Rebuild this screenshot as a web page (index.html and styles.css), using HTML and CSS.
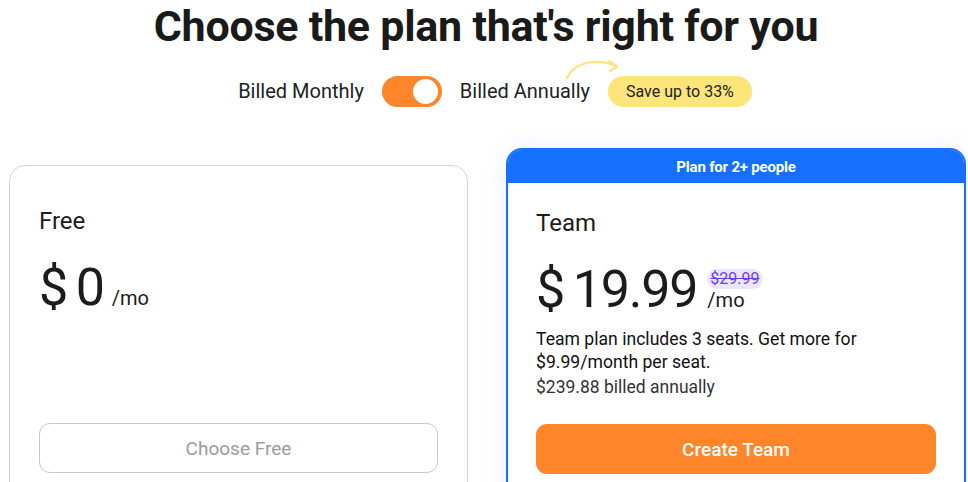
FILE: index.html
```html
<!DOCTYPE html>
<html lang="en">
<head>
<meta charset="utf-8">
<title>Pricing</title>
<link rel="stylesheet" href="styles.css">
</head>
<body>
<main class="page">
  <h1 class="title">Choose the plan that's right for you</h1>
  <div class="billing">
    <span class="billing-label">Billed Monthly</span>
    <span class="switch"><span class="knob"></span></span>
    <span class="billing-label annual">Billed Annually
      <svg class="arrow" width="60" height="24" viewBox="0 0 60 24" fill="none" stroke="#fde57a" stroke-width="2.2" stroke-linecap="round" stroke-linejoin="round">
        <path d="M3 22 C 10 6, 32 2, 52 10"/>
        <path d="M45 5 L53 10.5 L46 15"/>
      </svg>
    </span>
    <span class="save">Save up to 33%</span>
  </div>
  <section class="plans">
    <article class="plan plan-free">
      <h2 class="plan-name">Free</h2>
      <div class="price"><span class="amount">$ 0</span><span class="per">/mo</span></div>
      <button class="btn btn-outline">Choose Free</button>
    </article>
    <article class="plan plan-team">
      <div class="plan-banner">Plan for 2+ people</div>
      <div class="plan-body">
        <h2 class="plan-name">Team</h2>
        <div class="price"><span class="amount">$ 19.99</span><span class="per-stack"><span class="old">$29.99</span><span class="per-line">/mo</span></span></div>
        <p class="desc">Team plan includes 3 seats. Get more for $9.99/month per seat.</p>
        <p class="billed">$239.88 billed annually</p>
        <button class="btn btn-primary">Create Team</button>
      </div>
    </article>
  </section>
</main>
</body>
</html>
```
FILE: styles.css
```css
* { box-sizing: border-box; }
html, body { margin: 0; padding: 0; background: #ffffff; }
body {
  font-family: Roboto, "Liberation Sans", Arial, sans-serif;
  color: #1c1c1c;
  width: 968px;
  height: 482px;
  overflow: hidden;
}
.page { padding: 0; }
.title {
  margin: 0;
  padding-top: 2px;
  padding-left: 4px;
  text-align: center;
  font-size: 43px;
  line-height: 48px;
  font-weight: 700;
  color: #1a1a1a;
  letter-spacing: -0.25px;
}
.billing {
  margin-top: 25px;
  display: flex;
  justify-content: center;
  align-items: center;
  gap: 18px;
  padding-left: 22px;
  height: 32px;
}
.billing-label {
  font-size: 20px;
  color: #222;
  position: relative;
}
.arrow {
  position: absolute;
  left: 104px;
  top: -23px;
}
.switch {
  width: 60px;
  height: 31px;
  border-radius: 16px;
  background: #ff852b;
  display: flex;
  align-items: center;
  justify-content: flex-end;
  padding-right: 4px;
}
.knob {
  width: 25px;
  height: 25px;
  border-radius: 50%;
  background: #fff;
}
.save {
  background: #fde57a;
  border-radius: 16px;
  height: 31px;
  padding: 0 18px;
  display: flex;
  align-items: center;
  font-size: 16px;
  font-weight: 400;
  color: #222;
}
.plans {
  margin-top: 41px;
  display: flex;
  align-items: flex-start;
  gap: 38px;
  padding-left: 9px;
}
.plan {
  background: #fff;
}
.plan-free {
  width: 459px;
  margin-top: 17px;
  border: 1px solid #d4d4d4;
  border-radius: 16px;
  padding: 41px 29px 40px;
}
.plan-team {
  width: 460px;
  border: 2px solid #1570ff;
  border-radius: 16px;
  box-shadow: 0 0 24px rgba(40, 110, 255, 0.10);
  overflow: hidden;
}
.plan-banner {
  background: #1570ff;
  color: #fff;
  height: 33px;
  display: flex;
  align-items: center;
  justify-content: center;
  font-size: 15px;
  font-weight: 700;
  letter-spacing: -0.2px;
}
.plan-body { padding: 26px 28px 40px; }
.plan-name {
  margin: 0;
  font-size: 24px;
  line-height: 28px;
  font-weight: 400;
  color: #1c1c1c;
}
.price {
  margin-top: 27px;
  line-height: 52px;
  color: #1c1c1c;
}
.amount {
  font-size: 52px;
  font-weight: 400;
  letter-spacing: -1.2px;
  word-spacing: -3px;
}
.per {
  font-size: 20px;
  margin-left: 8px;
}
.per-stack {
  display: inline-block;
  margin-left: 10px;
  font-size: 20px;
  line-height: 22px;
}
.old {
  display: block;
  width: max-content;
  font-size: 16px;
  line-height: 20px;
  color: #6b3cf5;
  background: #ede6ff;
  border-radius: 10px;
  padding: 0 3px;
  text-decoration: line-through;
}
.per-line { display: block; }
.desc {
  margin: 0;
  font-size: 17.6px;
  line-height: 23px;
  font-weight: 400;
  color: #111;
  width: 345px;
}
.billed {
  margin: 2px 0 0;
  font-size: 17.5px;
  line-height: 23px;
  color: #333;
}
.btn {
  display: flex;
  align-items: center;
  justify-content: center;
  width: 100%;
  height: 50px;
  font-family: inherit;
  border-radius: 11px;
  cursor: pointer;
}
.btn-outline {
  margin-top: 97px;
  background: #fff;
  border: 1px solid #c8c8c8;
  color: #9c9c9c;
  font-size: 19px;
  font-weight: 400;
}
.btn-primary {
  margin-top: 25px;
  background: #ff852b;
  border: none;
  color: #fff;
  font-size: 19px;
  font-weight: 500;
}
```
